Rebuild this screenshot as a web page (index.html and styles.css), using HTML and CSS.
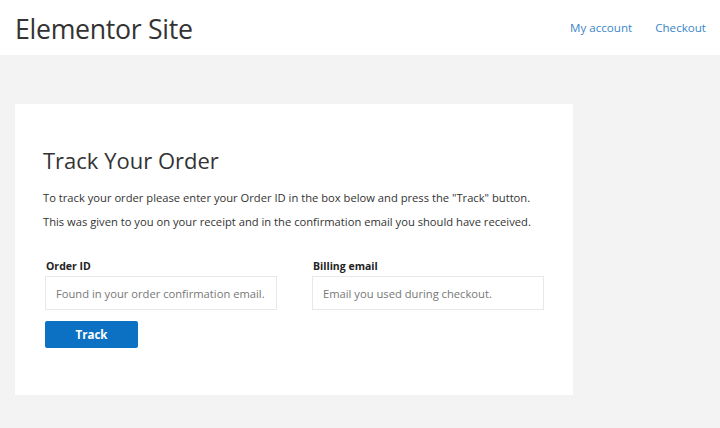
FILE: index.html
```html
<!DOCTYPE html>
<html lang="en">
<head>
<meta charset="utf-8">
<title>Track Your Order – Elementor Site</title>
<link rel="stylesheet" href="styles.css">
</head>
<body>
<header class="site-header">
  <div class="site-title">Elementor Site</div>
  <nav class="site-nav">
    <a href="#">My account</a>
    <a href="#">Checkout</a>
  </nav>
</header>
<main class="site-main">
  <section class="card">
    <h1 class="card-title">Track Your Order</h1>
    <p class="intro">To track your order please enter your Order ID in the box below and press the "Track" button.<br>This was given to you on your receipt and in the confirmation email you should have received.</p>
    <form class="track-form">
      <div class="fields">
        <label class="field">
          <span class="field-label">Order ID</span>
          <input class="field-input" type="text" placeholder="Found in your order confirmation email.">
        </label>
        <label class="field">
          <span class="field-label">Billing email</span>
          <input class="field-input" type="text" placeholder="Email you used during checkout.">
        </label>
      </div>
      <button class="track-btn" type="button">Track</button>
    </form>
  </section>
</main>
</body>
</html>
```
FILE: styles.css
```css
html, body {
  margin: 0;
  padding: 0;
}
body {
  font-family: "Open Sans", "Noto Sans", sans-serif;
  color: #333;
  background: #f3f3f3;
  width: 720px;
  height: 428px;
  overflow: hidden;
}
.site-header {
  height: 55px;
  background: #fff;
  display: flex;
  align-items: center;
  justify-content: space-between;
  padding: 0 14px 0 15px;
  box-sizing: border-box;
}
.site-title {
  font-size: 26.7px;
  color: #333;
  letter-spacing: -0.3px;
  margin-top: 2px;
}
.site-nav {
  display: flex;
  gap: 23px;
}
.site-nav a {
  color: #3a86c8;
  text-decoration: none;
  font-size: 11.6px;
}
.site-main {
  padding: 49px 15px;
}
.card {
  background: #fff;
  width: 558px;
  height: 291px;
  box-sizing: border-box;
  padding: 40px 28px 0 28px;
}
.card-title {
  margin: 0;
  font-size: 22px;
  font-weight: 400;
  line-height: 32px;
  color: #333;
}
.intro {
  margin: 10px 0 0;
  font-size: 11.2px;
  line-height: 24px;
  color: #333;
  white-space: nowrap;
}
.track-form {
  margin-top: 25px;
  padding-left: 2px;
}
.fields {
  display: flex;
  gap: 35px;
}
.field {
  display: flex;
  flex-direction: column;
  width: 232px;
}
.field-label {
  font-size: 10.5px;
  font-weight: 700;
  color: #222;
  line-height: 14px;
  margin-left: 1px;
}
.field-input {
  margin-top: 3px;
  height: 34px;
  box-sizing: border-box;
  border: 1px solid #e8e8e8;
  padding: 0 10px;
  font-family: inherit;
  font-size: 11.2px;
  color: #333;
  outline: none;
}
.field-input::placeholder {
  color: #777;
}
.track-btn {
  margin-top: 11px;
  width: 93px;
  height: 27px;
  background: #0c71c3;
  color: #fff;
  border: none;
  border-radius: 2px;
  font-family: inherit;
  font-weight: 700;
  font-size: 11.5px;
  padding: 0;
}
```
